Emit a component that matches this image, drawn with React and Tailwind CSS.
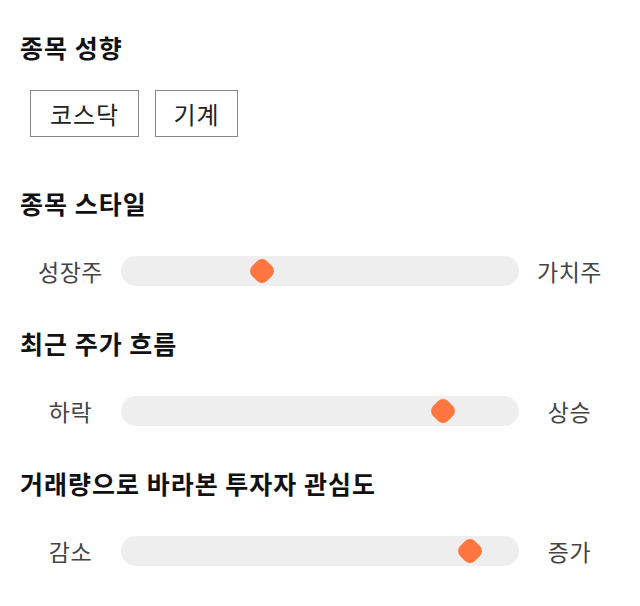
import React from "react";

const FONT = { fontFamily: '"Noto Sans CJK KR", "Noto Sans", sans-serif' };

function Slider({ left, right, pos }) {
  return (
    <div className="flex h-[30px] items-center">
      <div className="w-[101px] text-center text-[23px] leading-[30px] tracking-[0.5px] text-[#444]">{left}</div>
      <div className="relative h-[30px] flex-1 rounded-full bg-[#eeeeee]">
        <div
          className="absolute top-1/2 h-[21px] w-[21px] -translate-x-1/2 -translate-y-1/2 rotate-45 rounded-[7px] bg-[#ff7640]"
          style={{ left: `${pos}px` }}
        />
      </div>
      <div className="w-[101px] text-center text-[23px] leading-[30px] tracking-[0.5px] text-[#444]">{right}</div>
    </div>
  );
}

function Heading({ children, className }) {
  return (
    <h2 className={`text-[25px] font-bold leading-[30px] tracking-[1px] text-[#111] ${className}`}>{children}</h2>
  );
}

export default function App() {
  return (
    <div className="h-[606px] w-[640px] bg-white px-5 pt-8" style={FONT}>
      <Heading>종목 성향</Heading>
      <div className="mt-7 ml-[10px] flex gap-4">
        <div className="flex h-[47px] w-[109px] items-center justify-center border border-[#888] text-[24px] tracking-[1px] text-[#222]">코스닥</div>
        <div className="flex h-[47px] w-[83px] items-center justify-center border border-[#888] text-[24px] tracking-[1px] text-[#222]">기계</div>
      </div>
      <Heading className="mt-[51px]">종목 스타일</Heading>
      <div className="mt-[38px]">
        <Slider left="성장주" right="가치주" pos={141} />
      </div>
      <Heading className="mt-[42px]">최근 주가 흐름</Heading>
      <div className="mt-[38px]">
        <Slider left="하락" right="상승" pos={322} />
      </div>
      <Heading className="mt-[42px]">거래량으로 바라본 투자자 관심도</Heading>
      <div className="mt-[38px]">
        <Slider left="감소" right="증가" pos={349} />
      </div>
    </div>
  );
}
